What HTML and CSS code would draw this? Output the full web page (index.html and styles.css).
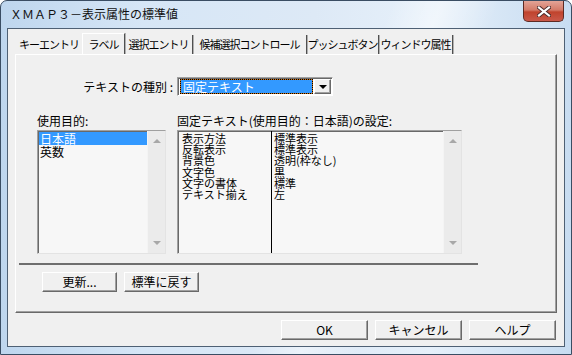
FILE: index.html
```html
<!DOCTYPE html>
<html lang="ja">
<head>
<meta charset="UTF-8">
<title>ＸＭＡＰ３－表示属性の標準値</title>
<link rel="stylesheet" href="styles.css">
</head>
<body>
<div class="window">
  <div class="titlebar">
    <div class="title">ＸＭＡＰ３－表示属性の標準値</div>
    <div class="close">
      <svg width="14" height="11" viewBox="0 0 14 11">
        <path d="M2 1.5 L12 9.5 M12 1.5 L2 9.5" stroke="#4a2a2a" stroke-width="4" stroke-linecap="square"/>
        <path d="M2 1.5 L12 9.5 M12 1.5 L2 9.5" stroke="#fff" stroke-width="2.2" stroke-linecap="square"/>
      </svg>
    </div>
  </div>
  <div class="client">
    <div class="tabs">
      <div class="tab t1">キーエントリ</div>
      <div class="tab t2 active">ラベル</div>
      <div class="tab t3">選択エントリ</div>
      <div class="tab t4">候補選択コントロール</div>
      <div class="tab t5">プッシュボタン</div>
      <div class="tab t6">ウィンドウ属性</div>
    </div>
    <div class="panel">
      <div class="type-row">
        <div class="type-label">テキストの種別 :</div>
        <div class="combo">
          <div class="combo-value">固定テキスト</div>
          <div class="combo-btn"><span class="arrow-down"></span></div>
        </div>
      </div>
      <div class="lists">
        <div class="col purpose">
          <div class="list-label">使用目的:</div>
          <div class="listbox">
            <div class="items">
              <div class="item selected">日本語</div>
              <div class="item">英数</div>
            </div>
            <div class="scrollbar">
              <span class="sb-up"></span>
              <span class="sb-down"></span>
            </div>
          </div>
        </div>
        <div class="col settings">
          <div class="list-label">固定テキスト(使用目的：日本語)の設定:</div>
          <div class="listbox">
            <div class="grid-col names">
              <div class="row">表示方法</div>
              <div class="row">反転表示</div>
              <div class="row">背景色</div>
              <div class="row">文字色</div>
              <div class="row">文字の書体</div>
              <div class="row">テキスト揃え</div>
            </div>
            <div class="grid-col values">
              <div class="row">標準表示</div>
              <div class="row">標準表示</div>
              <div class="row">透明(枠なし)</div>
              <div class="row">黒</div>
              <div class="row">標準</div>
              <div class="row">左</div>
            </div>
            <div class="scrollbar">
              <span class="sb-up"></span>
              <span class="sb-down"></span>
            </div>
          </div>
        </div>
      </div>
      <div class="separator"></div>
      <div class="panel-buttons">
        <button type="button" class="btn small">更新...</button>
        <button type="button" class="btn small">標準に戻す</button>
      </div>
    </div>
    <div class="footer">
      <button type="button" class="btn wide">OK</button>
      <button type="button" class="btn wide">キャンセル</button>
      <button type="button" class="btn wide">ヘルプ</button>
    </div>
  </div>
</div>
</body>
</html>
```

FILE: styles.css
```css
body {
  margin: 0;
  width: 572px;
  height: 355px;
  overflow: hidden;
  font-family: "Noto Sans CJK JP", sans-serif;
  font-size: 12px;
  color: #000;
  background: #fff;
}
.window {
  box-sizing: border-box;
  height: 355px;
  display: flex;
  flex-direction: column;
  padding: 0 6px 7px 6px;
  border: 1px solid #3a4d63;
  border-radius: 7px 7px 0 0;
  background:
    linear-gradient(112deg, rgba(255,255,255,0) 55%, rgba(255,255,255,0.45) 62%, rgba(255,255,255,0) 70%),
    linear-gradient(to right, #bed6ee 0%, #d6e6f6 25%, #dde9f6 55%, #e6f0fa 75%, #c7dcf1 100%);
}
.titlebar {
  height: 27px;
  display: flex;
  justify-content: space-between;
  align-items: flex-start;
}
.title {
  margin: 6px 0 0 3px;
  line-height: 14px;
  font-size: 12px;
  color: #111;
}
.close {
  width: 41px;
  height: 21px;
  margin-right: 1px;
  box-sizing: border-box;
  border: 1px solid #5d2a23;
  border-top: none;
  border-radius: 0 0 5px 5px;
  background: linear-gradient(#e3a497 0%, #d47a68 45%, #c0432d 55%, #c9594a 100%);
  display: flex;
  justify-content: center;
  align-items: center;
}
.client {
  flex: 1;
  display: flex;
  flex-direction: column;
  padding: 0 7px;
  border: 1px solid #4e6074;
  background: #f0f0f0;
}

/* tab strip */
.tabs {
  display: flex;
  align-items: flex-end;
  height: 20px;
  margin-top: 5px;
  padding-left: 2px;
}
.tab {
  box-sizing: border-box;
  height: 19px;
  line-height: 18px;
  font-size: 11px;
  letter-spacing: -1px;
  text-align: center;
  border-right: 1px solid #505050;
  box-shadow: 1px 0 0 #b0b0b0;
}
.t1 { width: 65px; border-right-color: transparent; box-shadow: none; }
.t2 { width: 43px; }
.t3 { width: 68px; }
.t4 { width: 114px; }
.t5 { width: 72px; }
.t6 { width: 74px; }
.tab.active {
  height: 21px;
  line-height: 20px;
  border-left: 1px solid #fff;
  border-top: 1px solid #fff;
}

/* page */
.panel {
  border: 1px solid;
  border-color: #fff #696969 #696969 #fff;
  box-shadow: inset -1px -1px 0 #a0a0a0;
  padding-bottom: 20px;
}
.type-row {
  display: flex;
  align-items: center;
  margin-top: 22px;
}
.type-label {
  width: 157px;
  margin-right: 4px;
  text-align: right;
  line-height: 14px;
}
.combo {
  box-sizing: border-box;
  width: 156px;
  height: 19px;
  display: flex;
  gap: 1px;
  padding: 1px 1px 1px 2px;
  border: 1px solid;
  border-color: #a0a0a0 #fff #fff #a0a0a0;
  box-shadow: inset 1px 1px 0 #696969;
  background: #fff;
}
.combo-value {
  flex: 1;
  padding-left: 2px;
  line-height: 13px;
  color: #fff;
  border: 1px dotted #000;
  background: linear-gradient(#3399ff, #3399ff) padding-box, linear-gradient(#d07010, #d07010) border-box;
}
.combo-btn {
  box-sizing: border-box;
  width: 17px;
  display: flex;
  justify-content: center;
  align-items: center;
  border: 1px solid;
  border-color: #fff #696969 #696969 #fff;
  box-shadow: inset -1px -1px 0 #a0a0a0;
  background: #f0f0f0;
}
.arrow-down {
  width: 0;
  height: 0;
  border-left: 4px solid transparent;
  border-right: 4px solid transparent;
  border-top: 4px solid #000;
}

.lists {
  display: flex;
  gap: 11px;
  margin-top: 18px;
  padding-left: 21px;
}
.purpose { width: 129px; }
.settings { width: 285px; }
.list-label {
  line-height: 14px;
  margin-bottom: 2px;
}
.listbox {
  box-sizing: border-box;
  height: 124px;
  display: flex;
  border: 1px solid;
  border-color: #a0a0a0 #e3e3e3 #e3e3e3 #a0a0a0;
  box-shadow: inset 1px 1px 0 #696969;
  background: #f7f7f7;
}
.items {
  flex: 1;
  padding: 1px 0 0 1px;
}
.item {
  line-height: 13px;
  padding-left: 1px;
}
.item.selected {
  background: #3399ff;
  color: #fff;
}
.grid-col {
  padding-top: 2px;
}
.names {
  width: 89px;
  padding-left: 4px;
  border-right: 1px solid #000;
}
.values {
  flex: 1;
  padding-left: 2px;
}
.row {
  font-size: 11px;
  line-height: 11.2px;
  white-space: nowrap;
}
.scrollbar {
  width: 17px;
  display: flex;
  flex-direction: column;
  justify-content: space-between;
  align-items: center;
  background: #ebebeb;
  border-left: 1px solid #f4f4f4;
  padding: 8px 0 8px;
}
.sb-up, .sb-down {
  width: 0;
  height: 0;
  border-left: 4px solid transparent;
  border-right: 4px solid transparent;
}
.sb-up { border-bottom: 4px solid #a8a8a8; }
.sb-down { border-top: 4px solid #a8a8a8; }

.separator {
  width: 459px;
  height: 2px;
  margin: 9px 0 0 3px;
  background: #6e6e6e;
}
.panel-buttons {
  display: flex;
  gap: 7px;
  margin-top: 7px;
  padding-left: 26px;
}

/* buttons */
.btn {
  box-sizing: border-box;
  height: 20px;
  padding: 0;
  font-family: "Noto Sans CJK JP", sans-serif;
  font-size: 12px;
  line-height: 16px;
  color: #000;
  background: #f0f0f0;
  border: 1px solid;
  border-color: #fff #696969 #696969 #fff;
  box-shadow: inset -1px -1px 0 #a0a0a0;
}
.btn.small { width: 75px; }
.btn.wide { width: 87px; }
.footer {
  display: flex;
  justify-content: flex-end;
  gap: 7px;
  margin-top: 7px;
  margin-right: 1px;
}
```
